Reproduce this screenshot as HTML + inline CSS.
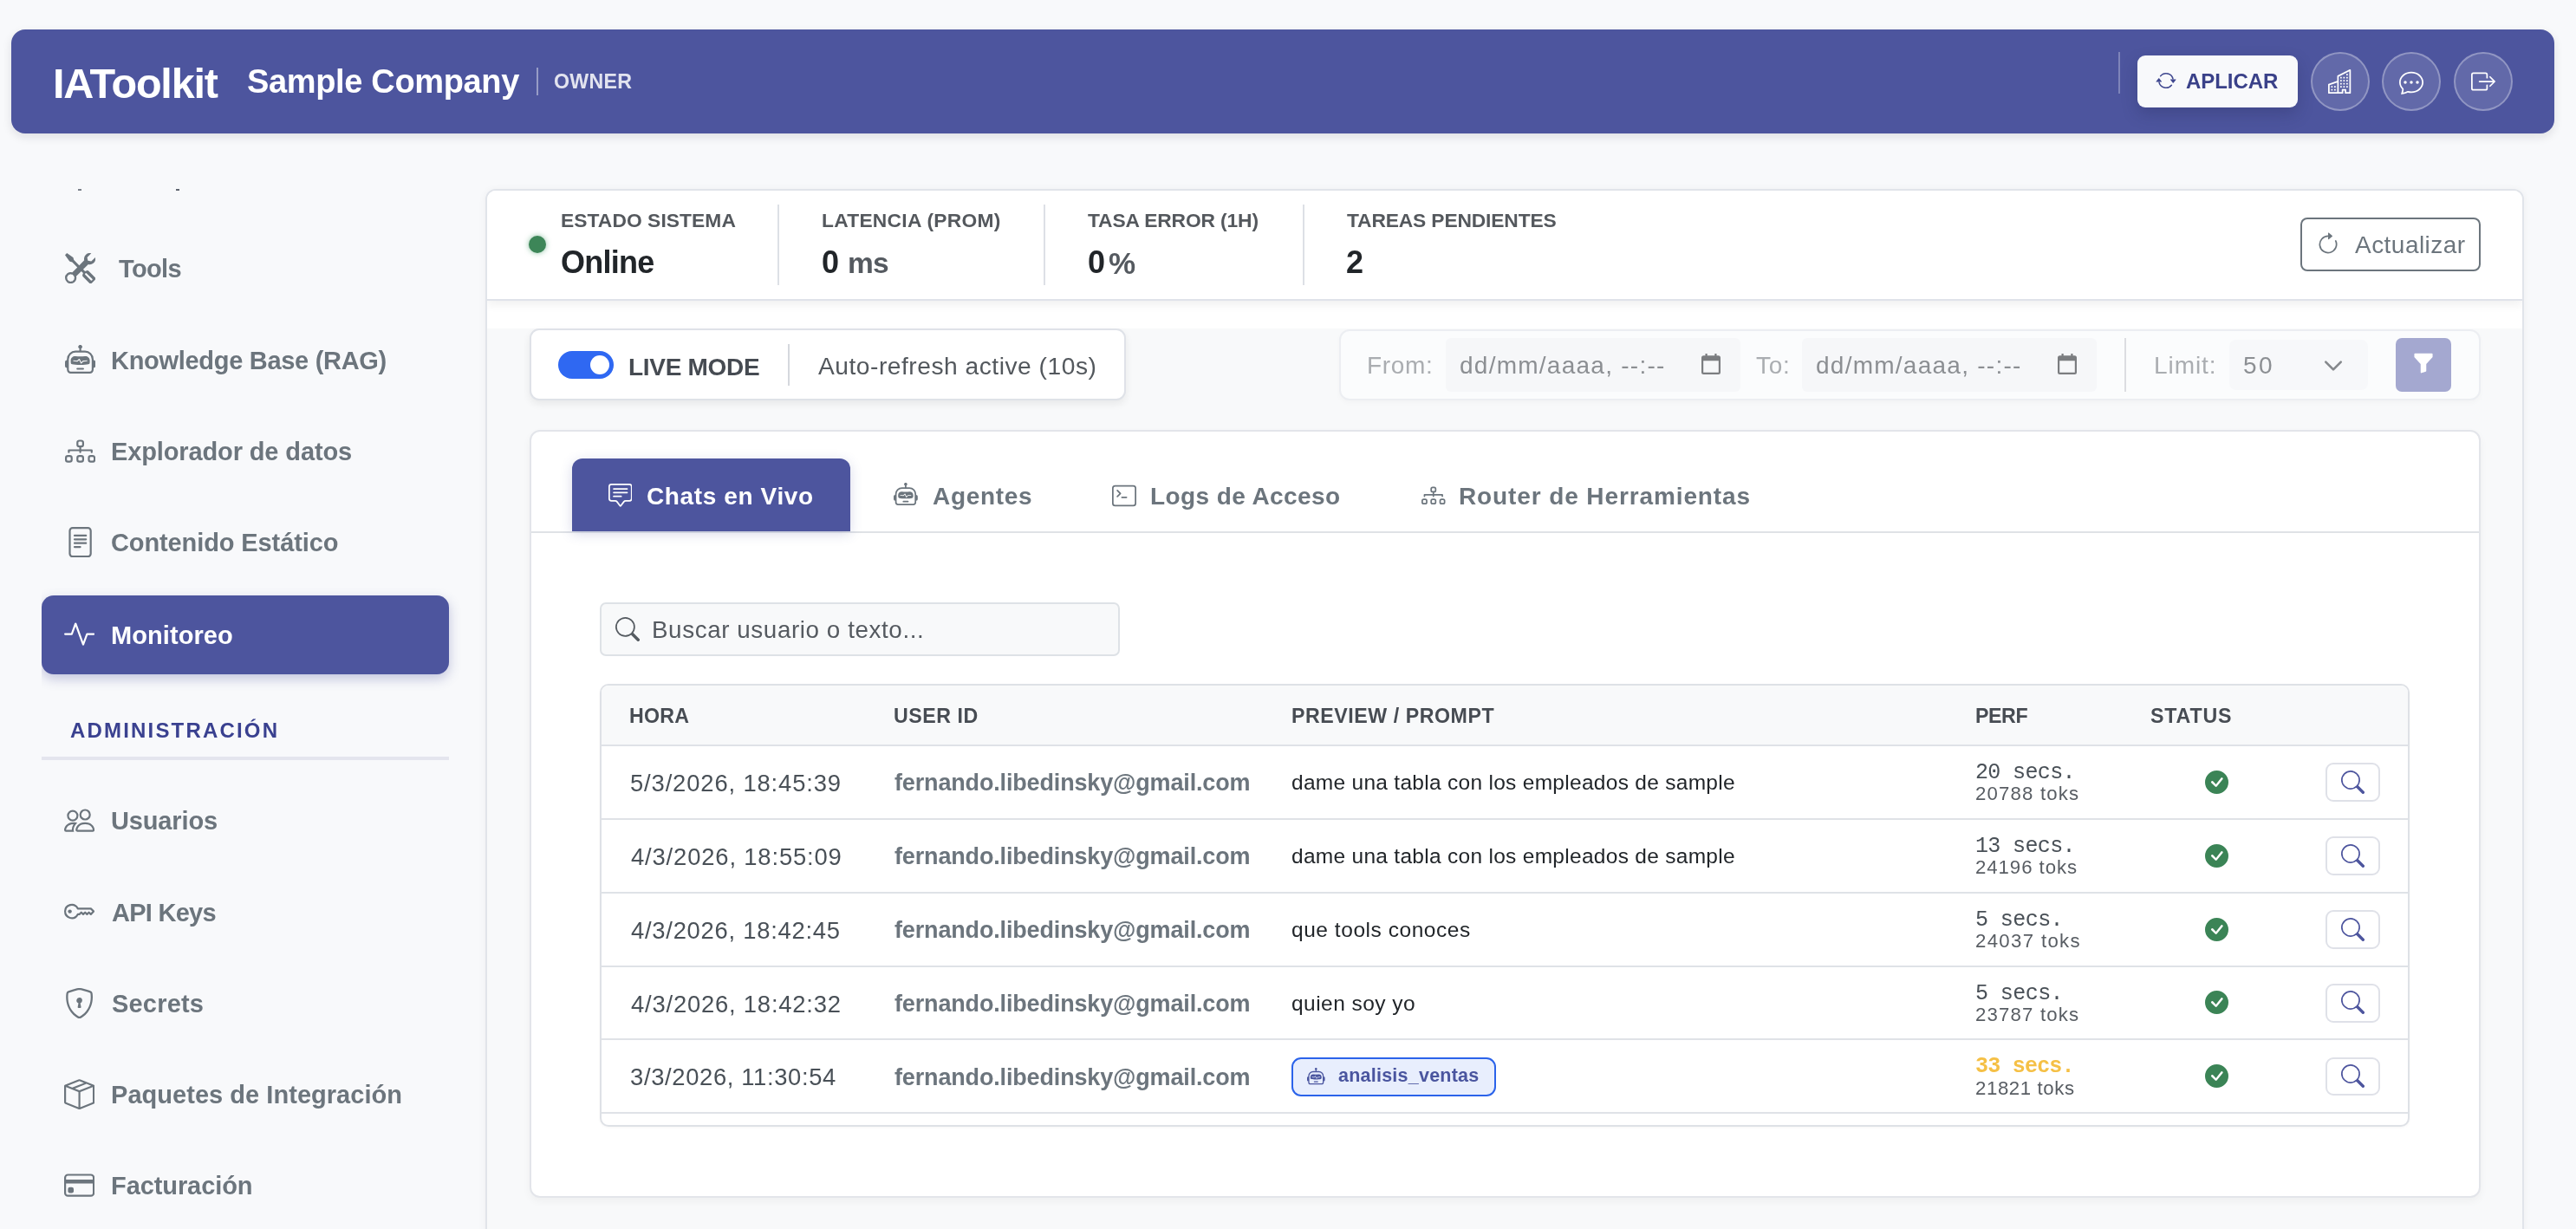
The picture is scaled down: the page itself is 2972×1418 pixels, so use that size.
<!DOCTYPE html>
<html lang="es"><head><meta charset="utf-8"><title>IAToolkit - Monitoreo</title>
<style>
html,body{margin:0;padding:0}
body{width:2972px;height:1418px;overflow:hidden;position:relative;background:#f8f9fb;font-family:'Liberation Sans', sans-serif;}
body>div,body>span,body>svg{position:absolute;box-sizing:border-box}
body>span{line-height:1;white-space:pre;display:block;will-change:transform}
</style></head><body>
<div style="left:13px;top:34px;width:2934px;height:120px;background:#4d559e;border-radius:16px;box-shadow:0 4px 11px rgba(20,20,40,.11)"></div>
<span style="left:60.80px;top:71.54px;font-size:48.5px;color:#fff;font-weight:700;letter-spacing:-1.163px;">IAToolkit</span>
<span style="left:285.20px;top:74.83px;font-size:38px;color:#fff;font-weight:700;letter-spacing:-0.348px;">Sample Company</span>
<div style="left:619px;top:78px;width:2px;height:32px;background:rgba(255,255,255,.42)"></div>
<span style="left:639.10px;top:83.46px;font-size:23.2px;color:rgba(255,255,255,.84);font-weight:700;letter-spacing:0.267px;">OWNER</span>
<div style="left:2444px;top:60px;width:2px;height:48px;background:rgba(255,255,255,.28)"></div>
<div style="left:2466px;top:64px;width:185px;height:60px;background:#f8f9fb;border-radius:9px;box-shadow:0 8px 18px rgba(30,35,80,.25)"></div>
<svg style="left:2487px;top:81.3px;" width="24" height="24" viewBox="0 0 16 16" fill="#3f478f"><path d="M11.534 7h3.932a.25.25 0 0 1 .192.41l-1.966 2.36a.25.25 0 0 1-.384 0l-1.966-2.36a.25.25 0 0 1 .192-.41m-11 2h3.932a.25.25 0 0 0 .192-.41L2.692 6.23a.25.25 0 0 0-.384 0L.342 8.59A.25.25 0 0 0 .534 9"/><path fill-rule="evenodd" d="M8 3c-1.552 0-2.94.707-3.857 1.818a.5.5 0 1 1-.771-.636A6.002 6.002 0 0 1 13.917 7H12.9A5 5 0 0 0 8 3M3.1 9a5.002 5.002 0 0 0 8.757 2.182.5.5 0 1 1 .771.636A6.002 6.002 0 0 1 2.083 9z"/></svg>
<span style="left:2522.20px;top:82.48px;font-size:24px;color:#3a4189;font-weight:700;letter-spacing:-0.055px;">APLICAR</span>
<div style="left:2666px;top:60px;width:68px;height:68px;border-radius:50%;background:rgba(255,255,255,.12);border:2px solid rgba(255,255,255,.3)"></div>
<svg style="left:2686px;top:80px;" width="28" height="28" viewBox="0 0 16 16" fill="#fff"><path d="M14.763.075A.5.5 0 0 1 15 .5v15a.5.5 0 0 1-.5.5h-3a.5.5 0 0 1-.5-.5V14h-1v1.5a.5.5 0 0 1-.5.5h-9a.5.5 0 0 1-.5-.5V10a.5.5 0 0 1 .342-.474L6 7.64V4.5a.5.5 0 0 1 .276-.447l8-4a.5.5 0 0 1 .487.022M6 8.694 1 10.36V15h5zM7 15h2v-1.5a.5.5 0 0 1 .5-.5h2a.5.5 0 0 1 .5.5V15h2V1.309l-7 3.5z"/><path d="M2 11h1v1H2zm2 0h1v1H4zm-2 2h1v1H2zm2 0h1v1H4zm4-4h1v1H8zm2 0h1v1h-1zm-2 2h1v1H8zm2 0h1v1h-1zm2-2h1v1h-1zm0 2h1v1h-1zM8 7h1v1H8zm2 0h1v1h-1zm2 0h1v1h-1zM8 5h1v1H8zm2 0h1v1h-1zm2 0h1v1h-1zm0-2h1v1h-1z"/></svg>
<div style="left:2748px;top:60px;width:68px;height:68px;border-radius:50%;background:rgba(255,255,255,.12);border:2px solid rgba(255,255,255,.3)"></div>
<svg style="left:2768px;top:81px;" width="28" height="28" viewBox="0 0 16 16" fill="#fff"><path d="M5 8a1 1 0 1 1-2 0 1 1 0 0 1 2 0m4 0a1 1 0 1 1-2 0 1 1 0 0 1 2 0m3 1a1 1 0 1 0 0-2 1 1 0 0 0 0 2"/><path d="m2.165 15.803.02-.004c1.83-.363 2.948-.842 3.468-1.105A9 9 0 0 0 8 15c4.418 0 8-3.134 8-7s-3.582-7-8-7-8 3.134-8 7c0 1.76.743 3.37 1.97 4.6a10.4 10.4 0 0 1-.524 2.318l-.003.011a11 11 0 0 1-.244.637c-.079.186.074.394.273.362a22 22 0 0 0 .693-.125m.8-3.108a1 1 0 0 0-.287-.801C1.618 10.83 1 9.468 1 8c0-3.192 3.004-6 7-6s7 2.808 7 6-3.004 6-7 6a8 8 0 0 1-2.088-.272 1 1 0 0 0-.711.074c-.387.196-1.24.57-2.634.893a11 11 0 0 0 .398-2"/></svg>
<div style="left:2831px;top:60px;width:68px;height:68px;border-radius:50%;background:rgba(255,255,255,.12);border:2px solid rgba(255,255,255,.3)"></div>
<svg style="left:2851px;top:80px;" width="28" height="28" viewBox="0 0 16 16" fill="#fff"><path fill-rule="evenodd" d="M10 12.5a.5.5 0 0 1-.5.5h-8a.5.5 0 0 1-.5-.5v-9a.5.5 0 0 1 .5-.5h8a.5.5 0 0 1 .5.5v2a.5.5 0 0 0 1 0v-2A1.5 1.5 0 0 0 9.5 2h-8A1.5 1.5 0 0 0 0 3.5v9A1.5 1.5 0 0 0 1.5 14h8a1.5 1.5 0 0 0 1.5-1.5v-2a.5.5 0 0 0-1 0z"/><path fill-rule="evenodd" d="M15.854 8.354a.5.5 0 0 0 0-.708l-3-3a.5.5 0 0 0-.708.708L14.293 7.5H5.5a.5.5 0 0 0 0 1h8.793l-2.147 2.146a.5.5 0 0 0 .708.708z"/></svg>
<div style="left:89.7px;top:218px;width:4.6px;height:1.7px;background:#7a808a"></div>
<div style="left:203px;top:218px;width:4.2px;height:2.4px;background:#5f6570"></div>
<div style="left:48px;top:650px;width:512px;height:180px;overflow:hidden"><div style="position:absolute;left:0;top:37px;width:470px;height:91px;background:#4d559e;border-radius:14px;box-shadow:0 5px 14px rgba(77,85,158,.32)"></div></div>
<svg style="left:74.5px;top:291.7px;" width="35.2" height="35.2" viewBox="0 0 16 16" fill="#6c757d"><path d="M1 0 0 1l2.2 3.081a1 1 0 0 0 .815.419h.07a1 1 0 0 1 .708.293l2.675 2.675-2.617 2.654A3.003 3.003 0 0 0 0 13a3 3 0 1 0 5.878-.851l2.654-2.617.968.968-.305.914a1 1 0 0 0 .242 1.023l3.27 3.27a.997.997 0 0 0 1.414 0l1.586-1.586a.997.997 0 0 0 0-1.414l-3.27-3.27a1 1 0 0 0-1.023-.242L10.5 9.5l-.96-.96 2.68-2.643A3.005 3.005 0 0 0 16 3q0-.405-.102-.777l-2.14 2.141L12 4l-.364-1.757L13.777.102a3 3 0 0 0-3.675 3.68L7.462 6.46 4.793 3.793a1 1 0 0 1-.293-.707v-.071a1 1 0 0 0-.419-.814zm9.646 10.646a.5.5 0 0 1 .708 0l2.914 2.915a.5.5 0 0 1-.707.707l-2.915-2.914a.5.5 0 0 1 0-.708M3 11l.471.242.529.026.287.445.445.287.026.529L5 13l-.242.471-.026.529-.445.287-.287.445-.529.026L3 15l-.471-.242L2 14.732l-.287-.445L1.268 14l-.026-.529L1 13l.242-.471.026-.529.445-.287.287-.445.529-.026z"/></svg>
<span style="left:137.00px;top:295.85px;font-size:29px;color:#6c757d;font-weight:700;letter-spacing:-0.662px;">Tools</span>
<svg style="left:74.5px;top:397.8px;" width="35.2" height="35.2" viewBox="0 0 16 16" fill="#6c757d"><path d="M6 12.5a.5.5 0 0 1 .5-.5h3a.5.5 0 0 1 0 1h-3a.5.5 0 0 1-.5-.5M3 8.062C3 6.76 4.235 5.765 5.53 5.886a26.6 26.6 0 0 0 4.94 0C11.765 5.765 13 6.76 13 8.062v1.157a.93.93 0 0 1-.765.935c-.845.147-2.34.346-4.235.346s-3.39-.2-4.235-.346A.93.93 0 0 1 3 9.219zm4.542-.827a.25.25 0 0 0-.217.068l-.92.9a25 25 0 0 1-1.871-.183.25.25 0 0 0-.068.495c.55.076 1.232.149 2.02.193a.25.25 0 0 0 .189-.071l.754-.736.847 1.71a.25.25 0 0 0 .404.062l.932-.97a25 25 0 0 0 1.922-.188.25.25 0 0 0-.068-.495c-.538.074-1.207.145-1.98.189a.25.25 0 0 0-.166.076l-.754.785-.842-1.7a.25.25 0 0 0-.182-.135"/><path d="M8.5 1.866a1 1 0 1 0-1 0V3h-2A4.5 4.5 0 0 0 1 7.5V8a1 1 0 0 0-1 1v2a1 1 0 0 0 1 1v1a2 2 0 0 0 2 2h10a2 2 0 0 0 2-2v-1a1 1 0 0 0 1-1V9a1 1 0 0 0-1-1v-.5A4.5 4.5 0 0 0 10.5 3h-2zM14 7.5V13a1 1 0 0 1-1 1H3a1 1 0 0 1-1-1V7.5A3.5 3.5 0 0 1 5.5 4h5A3.5 3.5 0 0 1 14 7.5"/></svg>
<span style="left:128.00px;top:401.95px;font-size:29px;color:#6c757d;font-weight:700;letter-spacing:-0.295px;">Knowledge Base (RAG)</span>
<svg style="left:74.5px;top:502.6px;" width="35.2" height="35.2" viewBox="0 0 16 16" fill="#6c757d"><path fill-rule="evenodd" d="M6 3.5A1.5 1.5 0 0 1 7.5 2h1A1.5 1.5 0 0 1 10 3.5v1A1.5 1.5 0 0 1 8.5 6v1H14a.5.5 0 0 1 .5.5v1a.5.5 0 0 1-1 0V8h-5v.5a.5.5 0 0 1-1 0V8h-5v.5a.5.5 0 0 1-1 0v-1A.5.5 0 0 1 2 7h5.5V6A1.5 1.5 0 0 1 6 4.5zM8.5 5a.5.5 0 0 0 .5-.5v-1a.5.5 0 0 0-.5-.5h-1a.5.5 0 0 0-.5.5v1a.5.5 0 0 0 .5.5zM0 11.5A1.5 1.5 0 0 1 1.5 10h1A1.5 1.5 0 0 1 4 11.5v1A1.5 1.5 0 0 1 2.5 14h-1A1.5 1.5 0 0 1 0 12.5zm1.5-.5a.5.5 0 0 0-.5.5v1a.5.5 0 0 0 .5.5h1a.5.5 0 0 0 .5-.5v-1a.5.5 0 0 0-.5-.5zm4.5.5A1.5 1.5 0 0 1 7.5 10h1a1.5 1.5 0 0 1 1.5 1.5v1A1.5 1.5 0 0 1 8.5 14h-1A1.5 1.5 0 0 1 6 12.5zm1.5-.5a.5.5 0 0 0-.5.5v1a.5.5 0 0 0 .5.5h1a.5.5 0 0 0 .5-.5v-1a.5.5 0 0 0-.5-.5zm4.5.5a1.5 1.5 0 0 1 1.5-1.5h1a1.5 1.5 0 0 1 1.5 1.5v1a1.5 1.5 0 0 1-1.5 1.5h-1a1.5 1.5 0 0 1-1.5-1.5zm1.5-.5a.5.5 0 0 0-.5.5v1a.5.5 0 0 0 .5.5h1a.5.5 0 0 0 .5-.5v-1a.5.5 0 0 0-.5-.5z"/></svg>
<span style="left:128.00px;top:506.75px;font-size:29px;color:#6c757d;font-weight:700;letter-spacing:-0.125px;">Explorador de datos</span>
<svg style="left:74.5px;top:608.2px;" width="35.2" height="35.2" viewBox="0 0 16 16" fill="#6c757d"><path d="M5 4a.5.5 0 0 0 0 1h6a.5.5 0 0 0 0-1zm-.5 2.5A.5.5 0 0 1 5 6h6a.5.5 0 0 1 0 1H5a.5.5 0 0 1-.5-.5M5 8a.5.5 0 0 0 0 1h6a.5.5 0 0 0 0-1zm0 2a.5.5 0 0 0 0 1h3a.5.5 0 0 0 0-1z"/><path d="M2 2a2 2 0 0 1 2-2h8a2 2 0 0 1 2 2v12a2 2 0 0 1-2 2H4a2 2 0 0 1-2-2zm10-1H4a1 1 0 0 0-1 1v12a1 1 0 0 0 1 1h8a1 1 0 0 0 1-1V2a1 1 0 0 0-1-1"/></svg>
<span style="left:128.00px;top:612.35px;font-size:29px;color:#6c757d;font-weight:700;letter-spacing:-0.107px;">Contenido Estático</span>
<svg style="left:73.9px;top:713.6px;" width="35.2" height="35.2" viewBox="0 0 16 16" fill="#fff"><path fill-rule="evenodd" d="M6 2a.5.5 0 0 1 .47.33L10 12.036l1.53-4.208A.5.5 0 0 1 12 7.5h3.5a.5.5 0 0 1 0 1h-3.15l-1.88 5.17a.5.5 0 0 1-.94 0L6 3.964 4.47 8.171A.5.5 0 0 1 4 8.5H.5a.5.5 0 0 1 0-1h3.15l1.88-5.17A.5.5 0 0 1 6 2"/></svg>
<span style="left:128.00px;top:718.75px;font-size:29px;color:#fff;font-weight:700;letter-spacing:0.071px;">Monitoreo</span>
<span style="left:81.00px;top:831.28px;font-size:24px;color:#3a4190;font-weight:700;letter-spacing:2.183px;">ADMINISTRACIÓN</span>
<div style="left:48px;top:873px;width:470px;height:3.6px;background:#e4e5ee"></div>
<svg style="left:74.2px;top:929.3px;" width="35.2" height="35.2" viewBox="0 0 16 16" fill="#6c757d"><path d="M15 14s1 0 1-1-1-4-5-4-5 3-5 4 1 1 1 1zm-7.978-1L7 12.996c.001-.264.167-1.03.76-1.72C8.312 10.629 9.282 10 11 10c1.717 0 2.687.63 3.24 1.276.593.69.758 1.457.76 1.72l-.008.002-.014.002zM11 7a2 2 0 1 0 0-4 2 2 0 0 0 0 4m3-2a3 3 0 1 1-6 0 3 3 0 0 1 6 0M6.936 9.28a6 6 0 0 0-1.23-.247A7 7 0 0 0 5 9c-4 0-5 3-5 4q0 1 1 1h4.216A2.24 2.24 0 0 1 5 13c0-1.01.377-2.042 1.09-2.904.243-.294.526-.569.846-.816M4.92 10A5.5 5.5 0 0 0 4 13H1c0-.26.164-1.03.76-1.724.545-.636 1.492-1.256 3.16-1.275ZM1.5 5.5a3 3 0 1 1 6 0 3 3 0 0 1-6 0m3-2a2 2 0 1 0 0 4 2 2 0 0 0 0-4"/></svg>
<span style="left:127.70px;top:932.65px;font-size:29px;color:#6c757d;font-weight:700;letter-spacing:-0.139px;">Usuarios</span>
<svg style="left:74.2px;top:1034px;" width="35.2" height="35.2" viewBox="0 0 16 16" fill="#6c757d"><path d="M0 8a4 4 0 0 1 7.465-2H14a.5.5 0 0 1 .354.146l1.5 1.5a.5.5 0 0 1 0 .708l-1.5 1.5a.5.5 0 0 1-.708 0L13 9.207l-.646.647a.5.5 0 0 1-.708 0L11 9.207l-.646.647a.5.5 0 0 1-.708 0L9 9.207l-.646.647A.5.5 0 0 1 8 10h-.535A4 4 0 0 1 0 8m4-3a3 3 0 1 0 2.712 4.285A.5.5 0 0 1 7.163 9h.63l.853-.854a.5.5 0 0 1 .708 0l.646.647.646-.647a.5.5 0 0 1 .708 0l.646.647.646-.647a.5.5 0 0 1 .708 0l.646.647.793-.793-1-1h-6.63a.5.5 0 0 1-.451-.285A3 3 0 0 0 4 5"/><path d="M4 8a1 1 0 1 1-2 0 1 1 0 0 1 2 0"/></svg>
<span style="left:128.70px;top:1039.05px;font-size:29px;color:#6c757d;font-weight:700;letter-spacing:-0.743px;">API Keys</span>
<svg style="left:74.2px;top:1140.1px;" width="35.2" height="35.2" viewBox="0 0 16 16" fill="#6c757d"><path d="M5.338 1.59a61 61 0 0 0-2.837.856.48.48 0 0 0-.328.39c-.554 4.157.726 7.19 2.253 9.188a10.7 10.7 0 0 0 2.287 2.233c.346.244.652.42.893.533q.18.085.293.118a1 1 0 0 0 .101.025 1 1 0 0 0 .1-.025q.114-.034.294-.118c.24-.113.547-.29.893-.533a10.7 10.7 0 0 0 2.287-2.233c1.527-1.997 2.807-5.031 2.253-9.188a.48.48 0 0 0-.328-.39c-.651-.213-1.75-.56-2.837-.855C9.552 1.29 8.531 1.067 8 1.067c-.53 0-1.552.223-2.662.524zM5.072.56C6.157.265 7.31 0 8 0s1.843.265 2.928.56c1.11.3 2.229.655 2.887.87a1.54 1.54 0 0 1 1.044 1.262c.596 4.477-.787 7.795-2.465 9.99a11.8 11.8 0 0 1-2.517 2.453 7 7 0 0 1-1.048.625c-.28.132-.581.24-.829.24s-.548-.108-.829-.24a7 7 0 0 1-1.048-.625 11.8 11.8 0 0 1-2.517-2.453C1.928 10.487.545 7.169 1.141 2.692A1.54 1.54 0 0 1 2.185 1.43 63 63 0 0 1 5.072.56"/><path d="M9.5 6.5a1.5 1.5 0 0 1-1 1.415l.385 1.99a.5.5 0 0 1-.491.595h-.788a.5.5 0 0 1-.49-.595l.384-1.99a1.5 1.5 0 1 1 2-1.415"/></svg>
<span style="left:128.70px;top:1144.05px;font-size:29px;color:#6c757d;font-weight:700;letter-spacing:0.188px;">Secrets</span>
<svg style="left:74.2px;top:1244.6px;" width="35.2" height="35.2" viewBox="0 0 16 16" fill="#6c757d"><path d="M8.186 1.113a.5.5 0 0 0-.372 0L1.846 3.5l2.404.961L10.404 2zm3.564 1.426L5.596 5 8 5.961 14.154 3.5zm3.25 1.7-6.5 2.6v7.922l6.5-2.6V4.24zM7.5 14.762V6.838L1 4.239v7.923zM7.443.184a1.5 1.5 0 0 1 1.114 0l7.129 2.852A.5.5 0 0 1 16 3.5v8.662a1 1 0 0 1-.629.928l-7.185 2.874a.5.5 0 0 1-.372 0L.63 13.09a1 1 0 0 1-.63-.928V3.5a.5.5 0 0 1 .314-.464z"/></svg>
<span style="left:127.70px;top:1249.45px;font-size:29px;color:#6c757d;font-weight:700;letter-spacing:0.037px;">Paquetes de Integración</span>
<svg style="left:74.2px;top:1350.4px;" width="35.2" height="35.2" viewBox="0 0 16 16" fill="#6c757d"><path d="M0 4a2 2 0 0 1 2-2h12a2 2 0 0 1 2 2v8a2 2 0 0 1-2 2H2a2 2 0 0 1-2-2zm2-1a1 1 0 0 0-1 1v1h14V4a1 1 0 0 0-1-1zm13 4H1v5a1 1 0 0 0 1 1h12a1 1 0 0 0 1-1z"/><path d="M2 10a1 1 0 0 1 1-1h1a1 1 0 0 1 1 1v1a1 1 0 0 1-1 1H3a1 1 0 0 1-1-1z"/></svg>
<span style="left:127.70px;top:1354.35px;font-size:29px;color:#6c757d;font-weight:700;letter-spacing:-0.086px;">Facturación</span>
<div style="left:560px;top:218px;width:2352px;height:1230px;background:#f8f9fa;border:2px solid #e1e4ea;border-radius:12px;overflow:hidden;box-shadow:0 1px 10px rgba(0,0,0,.05)"><div style="position:absolute;left:0;top:0;right:0;height:159px;background:#fff"></div><div style="position:absolute;left:0;top:0;right:0;height:125px;background:#fff;border-bottom:2px solid #e0e3ea;box-shadow:0 5px 10px rgba(0,0,0,.06)"></div></div>
<div style="left:609.7px;top:271.7px;width:20.6px;height:20.6px;background:#3d8658;border-radius:50%;box-shadow:0 0 6px rgba(45,140,85,.55)"></div>
<span style="left:646.50px;top:242.80px;font-size:22.8px;color:#54585d;font-weight:700;letter-spacing:0.069px;">ESTADO SISTEMA</span>
<span style="left:646.50px;top:285.33px;font-size:36px;color:#212529;font-weight:700;letter-spacing:-0.737px;">Online</span>
<div style="left:897px;top:236px;width:2px;height:93px;background:#dde0e6"></div>
<span style="left:947.70px;top:242.80px;font-size:22.8px;color:#54585d;font-weight:700;letter-spacing:0.260px;">LATENCIA (PROM)</span>
<span style="left:947.70px;top:285.33px;font-size:36px;color:#212529;font-weight:700;">0</span>
<span style="left:977.50px;top:287.44px;font-size:33.5px;color:#555a60;font-weight:700;letter-spacing:-0.887px;">ms</span>
<div style="left:1204.2px;top:236px;width:2px;height:93px;background:#dde0e6"></div>
<span style="left:1255.10px;top:242.80px;font-size:22.8px;color:#54585d;font-weight:700;letter-spacing:-0.128px;">TASA ERROR (1H)</span>
<span style="left:1254.60px;top:285.33px;font-size:36px;color:#212529;font-weight:700;">0</span>
<span style="left:1278.80px;top:286.17px;font-size:35px;color:#555a60;font-weight:700;">%</span>
<div style="left:1503px;top:236px;width:2px;height:93px;background:#dde0e6"></div>
<span style="left:1553.60px;top:242.80px;font-size:22.8px;color:#54585d;font-weight:700;letter-spacing:-0.146px;">TAREAS PENDIENTES</span>
<span style="left:1553.00px;top:285.33px;font-size:36px;color:#212529;font-weight:700;">2</span>
<div style="left:2654px;top:251px;width:208px;height:62px;border:2px solid #6c757d;border-radius:8px;background:#fff"></div>
<svg style="left:2672.2px;top:267.6px;" width="28" height="28" viewBox="0 0 16 16" fill="#6c757d"><path fill-rule="evenodd" d="M8 3a5 5 0 1 0 4.546 2.914.5.5 0 0 1 .908-.417A6 6 0 1 1 8 2z"/><path d="M8 4.466V.534a.25.25 0 0 1 .41-.192l2.36 1.966c.12.1.12.284 0 .384L8.41 4.658A.25.25 0 0 1 8 4.466"/></svg>
<span style="left:2716.80px;top:268.60px;font-size:28px;color:#6c757d;letter-spacing:0.465px;">Actualizar</span>
<div style="left:610.5px;top:379px;width:688px;height:83.3px;background:#fff;border:2px solid #dfe2e8;border-radius:11px;box-shadow:0 4px 10px rgba(0,0,0,.07)"></div>
<div style="left:644px;top:405px;width:64px;height:32px;background:#2f68f2;border-radius:16px"><div style="position:absolute;right:5px;top:5px;width:22px;height:22px;border-radius:50%;background:#fff"></div></div>
<span style="left:725.00px;top:409.90px;font-size:28px;color:#464b52;font-weight:700;letter-spacing:-0.292px;">LIVE MODE</span>
<div style="left:908.5px;top:397px;width:2px;height:48px;background:#d5d8dd"></div>
<span style="left:944.40px;top:407.53px;font-size:28.2px;color:#53585d;letter-spacing:0.511px;">Auto-refresh active (10s)</span>
<div style="left:1545px;top:379.5px;width:1317px;height:82.5px;background:#fbfcfd;border:2px solid #eceef2;border-radius:12px;box-shadow:0 3px 6px rgba(0,0,0,.025)"></div>
<span style="left:1577.00px;top:407.90px;font-size:28px;color:#aaadb1;letter-spacing:0.669px;">From:</span>
<div style="left:1668px;top:390px;width:340px;height:62px;background:#f6f7f9;border-radius:6px"></div>
<span style="left:1684.00px;top:407.90px;font-size:28px;color:#8c8f93;letter-spacing:1.253px;">dd/mm/aaaa, --:--</span>
<svg style="left:1963px;top:408px" width="22" height="24" viewBox="0 0 22 24" fill="#7b7d80"><path fill-rule="evenodd" d="M4.5 0h2.2v2.3h8.6V0h2.2v2.3H19.5A2.5 2.5 0 0 1 22 4.8v16.7A2.5 2.5 0 0 1 19.500 24H2.5A2.5 2.5 0 0 1 0 21.500V4.800A2.500 2.500 0 0 1 2.500 2.300H4.500zM2.200 8.200V21.800H19.800V8.200z"/></svg>
<span style="left:2025.70px;top:407.90px;font-size:28px;color:#aaadb1;letter-spacing:0.714px;">To:</span>
<div style="left:2079px;top:390px;width:340px;height:62px;background:#f6f7f9;border-radius:6px"></div>
<span style="left:2095.00px;top:407.90px;font-size:28px;color:#8c8f93;letter-spacing:1.253px;">dd/mm/aaaa, --:--</span>
<svg style="left:2374px;top:408px" width="22" height="24" viewBox="0 0 22 24" fill="#7b7d80"><path fill-rule="evenodd" d="M4.5 0h2.2v2.3h8.6V0h2.2v2.3H19.5A2.5 2.5 0 0 1 22 4.8v16.7A2.5 2.5 0 0 1 19.500 24H2.5A2.5 2.5 0 0 1 0 21.500V4.800A2.500 2.500 0 0 1 2.500 2.300H4.500zM2.200 8.200V21.800H19.800V8.200z"/></svg>
<div style="left:2451px;top:390px;width:2px;height:62px;background:#dcdde1"></div>
<span style="left:2484.60px;top:407.90px;font-size:28px;color:#aaadb1;letter-spacing:0.937px;">Limit:</span>
<div style="left:2572px;top:392px;width:160px;height:58px;background:#f7f8fa;border-radius:8px"></div>
<span style="left:2588.00px;top:407.90px;font-size:28px;color:#8c8f93;letter-spacing:2.428px;">50</span>
<svg style="left:2678px;top:408px" width="28" height="28" viewBox="0 0 16 16" fill="none" stroke="#85888c" stroke-width="1.5" stroke-linecap="round" stroke-linejoin="round"><path d="m3 5.5 5 5 5-5"/></svg>
<div style="left:2764px;top:390px;width:64px;height:62px;background:#a4a8d0;border-radius:7px"></div>
<svg style="left:2783px;top:406px;" width="26" height="26" viewBox="0 0 16 16" fill="#fff"><path d="M1.5 1.5A.5.5 0 0 1 2 1h12a.5.5 0 0 1 .5.5v2a.5.5 0 0 1-.128.334L10 8.692V13.5a.5.5 0 0 1-.342.474l-3 1A.5.5 0 0 1 6 14.5V8.692L1.628 3.834A.5.5 0 0 1 1.5 3.5z"/></svg>
<div style="left:611px;top:496px;width:2251px;height:886px;background:#fff;border:2px solid #e3e5ea;border-radius:12px;box-shadow:0 4px 10px rgba(0,0,0,.045)"></div>
<div style="left:613px;top:613px;width:2247px;height:2px;background:#dfe2e6"></div>
<div style="left:660px;top:529px;width:321px;height:84px;background:#4d559e;border-radius:12px 12px 0 0;box-shadow:0 3px 14px rgba(77,85,158,.22)"></div>
<svg style="left:701.6px;top:557.8px;" width="27.6" height="27.6" viewBox="0 0 16 16" fill="#fff"><path d="M14 1a1 1 0 0 1 1 1v8a1 1 0 0 1-1 1h-2.5a2 2 0 0 0-1.6.8L8 14.333 6.1 11.8a2 2 0 0 0-1.6-.8H2a1 1 0 0 1-1-1V2a1 1 0 0 1 1-1zM2 0a2 2 0 0 0-2 2v8a2 2 0 0 0 2 2h2.5a1 1 0 0 1 .8.4l1.9 2.533a1 1 0 0 0 1.6 0l1.9-2.533a1 1 0 0 1 .8-.4H14a2 2 0 0 0 2-2V2a2 2 0 0 0-2-2z"/><path d="M3 3.5a.5.5 0 0 1 .5-.5h9a.5.5 0 0 1 0 1h-9a.5.5 0 0 1-.5-.5M3 6a.5.5 0 0 1 .5-.5h9a.5.5 0 0 1 0 1h-9A.5.5 0 0 1 3 6m0 2.5a.5.5 0 0 1 .5-.5h5a.5.5 0 0 1 0 1h-5a.5.5 0 0 1-.5-.5"/></svg>
<span style="left:745.70px;top:558.70px;font-size:28px;color:#fff;font-weight:700;letter-spacing:0.621px;">Chats en Vivo</span>
<svg style="left:1031.2px;top:557.4px;" width="27.8" height="27.8" viewBox="0 0 16 16" fill="#6c757d"><path d="M6 12.5a.5.5 0 0 1 .5-.5h3a.5.5 0 0 1 0 1h-3a.5.5 0 0 1-.5-.5M3 8.062C3 6.76 4.235 5.765 5.53 5.886a26.6 26.6 0 0 0 4.94 0C11.765 5.765 13 6.76 13 8.062v1.157a.93.93 0 0 1-.765.935c-.845.147-2.34.346-4.235.346s-3.39-.2-4.235-.346A.93.93 0 0 1 3 9.219zm4.542-.827a.25.25 0 0 0-.217.068l-.92.9a25 25 0 0 1-1.871-.183.25.25 0 0 0-.068.495c.55.076 1.232.149 2.02.193a.25.25 0 0 0 .189-.071l.754-.736.847 1.71a.25.25 0 0 0 .404.062l.932-.97a25 25 0 0 0 1.922-.188.25.25 0 0 0-.068-.495c-.538.074-1.207.145-1.98.189a.25.25 0 0 0-.166.076l-.754.785-.842-1.7a.25.25 0 0 0-.182-.135"/><path d="M8.5 1.866a1 1 0 1 0-1 0V3h-2A4.5 4.5 0 0 0 1 7.5V8a1 1 0 0 0-1 1v2a1 1 0 0 0 1 1v1a2 2 0 0 0 2 2h10a2 2 0 0 0 2-2v-1a1 1 0 0 0 1-1V9a1 1 0 0 0-1-1v-.5A4.5 4.5 0 0 0 10.5 3h-2zM14 7.5V13a1 1 0 0 1-1 1H3a1 1 0 0 1-1-1V7.5A3.5 3.5 0 0 1 5.5 4h5A3.5 3.5 0 0 1 14 7.5"/></svg>
<span style="left:1076.00px;top:558.70px;font-size:28px;color:#6c757d;font-weight:700;letter-spacing:0.684px;">Agentes</span>
<svg style="left:1282.6px;top:557.6px;" width="28" height="28" viewBox="0 0 16 16" fill="#6c757d"><path d="M6 9a.5.5 0 0 1 .5-.5h3a.5.5 0 0 1 0 1h-3A.5.5 0 0 1 6 9M3.854 4.146a.5.5 0 1 0-.708.708L4.793 6.5 3.146 8.146a.5.5 0 1 0 .708.708l2-2a.5.5 0 0 0 0-.708z"/><path d="M2 1a2 2 0 0 0-2 2v10a2 2 0 0 0 2 2h12a2 2 0 0 0 2-2V3a2 2 0 0 0-2-2zm12 1a1 1 0 0 1 1 1v10a1 1 0 0 1-1 1H2a1 1 0 0 1-1-1V3a1 1 0 0 1 1-1z"/></svg>
<span style="left:1327.00px;top:558.70px;font-size:28px;color:#6c757d;font-weight:700;letter-spacing:0.413px;">Logs de Acceso</span>
<svg style="left:1640px;top:557.6px;" width="27.5" height="27.5" viewBox="0 0 16 16" fill="#6c757d"><path fill-rule="evenodd" d="M6 3.5A1.5 1.5 0 0 1 7.5 2h1A1.5 1.5 0 0 1 10 3.5v1A1.5 1.5 0 0 1 8.5 6v1H14a.5.5 0 0 1 .5.5v1a.5.5 0 0 1-1 0V8h-5v.5a.5.5 0 0 1-1 0V8h-5v.5a.5.5 0 0 1-1 0v-1A.5.5 0 0 1 2 7h5.5V6A1.5 1.5 0 0 1 6 4.5zM8.5 5a.5.5 0 0 0 .5-.5v-1a.5.5 0 0 0-.5-.5h-1a.5.5 0 0 0-.5.5v1a.5.5 0 0 0 .5.5zM0 11.5A1.5 1.5 0 0 1 1.5 10h1A1.5 1.5 0 0 1 4 11.5v1A1.5 1.5 0 0 1 2.5 14h-1A1.5 1.5 0 0 1 0 12.5zm1.5-.5a.5.5 0 0 0-.5.5v1a.5.5 0 0 0 .5.5h1a.5.5 0 0 0 .5-.5v-1a.5.5 0 0 0-.5-.5zm4.5.5A1.5 1.5 0 0 1 7.5 10h1a1.5 1.5 0 0 1 1.5 1.5v1A1.5 1.5 0 0 1 8.5 14h-1A1.5 1.5 0 0 1 6 12.5zm1.5-.5a.5.5 0 0 0-.5.5v1a.5.5 0 0 0 .5.5h1a.5.5 0 0 0 .5-.5v-1a.5.5 0 0 0-.5-.5zm4.5.5a1.5 1.5 0 0 1 1.5-1.5h1a1.5 1.5 0 0 1 1.5 1.5v1a1.5 1.5 0 0 1-1.5 1.5h-1a1.5 1.5 0 0 1-1.5-1.5zm1.5-.5a.5.5 0 0 0-.5.5v1a.5.5 0 0 0 .5.5h1a.5.5 0 0 0 .5-.5v-1a.5.5 0 0 0-.5-.5z"/></svg>
<span style="left:1683.00px;top:558.70px;font-size:28px;color:#6c757d;font-weight:700;letter-spacing:0.888px;">Router de Herramientas</span>
<div style="left:692px;top:695px;width:600px;height:62px;background:#f8f9fa;border:2px solid #dee2e6;border-radius:7px"></div>
<svg style="left:710px;top:712px;" width="28" height="28" viewBox="0 0 16 16" fill="#555b61"><path d="M11.742 10.344a6.5 6.5 0 1 0-1.397 1.398h-.001q.044.06.098.115l3.85 3.85a1 1 0 0 0 1.415-1.414l-3.85-3.85a1 1 0 0 0-.115-.1zM12 6.5a5.5 5.5 0 1 1-11 0 5.5 5.5 0 0 1 11 0"/></svg>
<span style="left:751.50px;top:712.87px;font-size:27.8px;color:#555a60;letter-spacing:0.583px;">Buscar usuario o texto...</span>
<div style="left:692px;top:789px;width:2088px;height:511px;background:#fff;border:2px solid #dee1e6;border-radius:10px;overflow:hidden;box-shadow:0 1px 3px rgba(0,0,0,.04)"><div style="position:absolute;left:0;top:0;right:0;height:68.5px;background:#f8f9fa"></div><div style="position:absolute;left:0;right:0;top:67.5px;height:2px;background:#dfe2e7"></div><div style="position:absolute;left:0;right:0;top:152.5px;height:2px;background:#dfe2e7"></div><div style="position:absolute;left:0;right:0;top:237.5px;height:2px;background:#dfe2e7"></div><div style="position:absolute;left:0;right:0;top:322.5px;height:2px;background:#dfe2e7"></div><div style="position:absolute;left:0;right:0;top:407px;height:2px;background:#dfe2e7"></div><div style="position:absolute;left:0;right:0;top:492px;height:2px;background:#dfe2e7"></div></div>
<span style="left:726.30px;top:814.76px;font-size:23.2px;color:#474c53;font-weight:700;letter-spacing:0.258px;">HORA</span>
<span style="left:1031.00px;top:814.76px;font-size:23.2px;color:#474c53;font-weight:700;letter-spacing:0.532px;">USER ID</span>
<span style="left:1489.50px;top:814.76px;font-size:23.2px;color:#474c53;font-weight:700;letter-spacing:0.547px;">PREVIEW / PROMPT</span>
<span style="left:2279.00px;top:814.76px;font-size:23.2px;color:#474c53;font-weight:700;letter-spacing:-0.426px;">PERF</span>
<span style="left:2481.00px;top:814.76px;font-size:23.2px;color:#474c53;font-weight:700;letter-spacing:0.832px;">STATUS</span>
<span style="left:726.50px;top:889.81px;font-size:27.4px;color:#495057;letter-spacing:0.857px;">5/3/2026, 18:45:39</span>
<span style="left:1032.40px;top:890.04px;font-size:27px;color:#6c757d;font-weight:700;letter-spacing:-0.157px;">fernando.libedinsky@gmail.com</span>
<span style="left:1489.50px;top:891.46px;font-size:24.5px;color:#212529;letter-spacing:0.287px;">dame una tabla con los empleados de sample</span>
<span style="left:2279.30px;top:878.84px;font-size:25px;color:#495057;font-family:'Liberation Mono', monospace;letter-spacing:-0.631px;">20 secs.</span>
<span style="left:2279.30px;top:905.21px;font-size:22.2px;color:#585d63;letter-spacing:1.171px;">20788 toks</span>
<svg style="left:2544px;top:888.5px;" width="27" height="27" viewBox="0 0 16 16" fill="#3b8456"><path d="M16 8A8 8 0 1 1 0 8a8 8 0 0 1 16 0m-3.97-3.03a.75.75 0 0 0-1.08.022L7.477 9.417 5.384 7.323a.75.75 0 0 0-1.06 1.06L6.97 11.03a.75.75 0 0 0 1.079-.02l3.992-4.99a.75.75 0 0 0-.01-1.05z"/></svg>
<div style="left:2683.3px;top:880px;width:62.6px;height:44.8px;background:#fff;border:2px solid #dfe1e8;border-radius:9px"></div>
<svg style="left:2700.5px;top:888.5px;" width="27" height="27" viewBox="0 0 16 16" fill="#4d559e"><path d="M11.742 10.344a6.5 6.5 0 1 0-1.397 1.398h-.001q.044.06.098.115l3.85 3.85a1 1 0 0 0 1.415-1.414l-3.85-3.85a1 1 0 0 0-.115-.1zM12 6.5a5.5 5.5 0 1 1-11 0 5.5 5.5 0 0 1 11 0"/></svg>
<span style="left:727.50px;top:974.81px;font-size:27.4px;color:#495057;letter-spacing:0.845px;">4/3/2026, 18:55:09</span>
<span style="left:1032.40px;top:975.04px;font-size:27px;color:#6c757d;font-weight:700;letter-spacing:-0.157px;">fernando.libedinsky@gmail.com</span>
<span style="left:1489.50px;top:976.46px;font-size:24.5px;color:#212529;letter-spacing:0.287px;">dame una tabla con los empleados de sample</span>
<span style="left:2279.30px;top:963.84px;font-size:25px;color:#495057;font-family:'Liberation Mono', monospace;letter-spacing:-0.631px;">13 secs.</span>
<span style="left:2279.30px;top:990.21px;font-size:22.2px;color:#585d63;letter-spacing:0.949px;">24196 toks</span>
<svg style="left:2544px;top:973.5px;" width="27" height="27" viewBox="0 0 16 16" fill="#3b8456"><path d="M16 8A8 8 0 1 1 0 8a8 8 0 0 1 16 0m-3.97-3.03a.75.75 0 0 0-1.08.022L7.477 9.417 5.384 7.323a.75.75 0 0 0-1.06 1.06L6.97 11.03a.75.75 0 0 0 1.079-.02l3.992-4.99a.75.75 0 0 0-.01-1.05z"/></svg>
<div style="left:2683.3px;top:965px;width:62.6px;height:44.8px;background:#fff;border:2px solid #dfe1e8;border-radius:9px"></div>
<svg style="left:2700.5px;top:973.5px;" width="27" height="27" viewBox="0 0 16 16" fill="#4d559e"><path d="M11.742 10.344a6.5 6.5 0 1 0-1.397 1.398h-.001q.044.06.098.115l3.85 3.85a1 1 0 0 0 1.415-1.414l-3.85-3.85a1 1 0 0 0-.115-.1zM12 6.5a5.5 5.5 0 1 1-11 0 5.5 5.5 0 0 1 11 0"/></svg>
<span style="left:727.50px;top:1059.81px;font-size:27.4px;color:#495057;letter-spacing:0.740px;">4/3/2026, 18:42:45</span>
<span style="left:1032.40px;top:1060.04px;font-size:27px;color:#6c757d;font-weight:700;letter-spacing:-0.157px;">fernando.libedinsky@gmail.com</span>
<span style="left:1489.50px;top:1061.46px;font-size:24.5px;color:#212529;letter-spacing:0.547px;">que tools conoces</span>
<span style="left:2279.30px;top:1048.84px;font-size:25px;color:#495057;font-family:'Liberation Mono', monospace;letter-spacing:-0.569px;">5 secs.</span>
<span style="left:2279.30px;top:1075.21px;font-size:22.2px;color:#585d63;letter-spacing:1.338px;">24037 toks</span>
<svg style="left:2544px;top:1058.5px;" width="27" height="27" viewBox="0 0 16 16" fill="#3b8456"><path d="M16 8A8 8 0 1 1 0 8a8 8 0 0 1 16 0m-3.97-3.03a.75.75 0 0 0-1.08.022L7.477 9.417 5.384 7.323a.75.75 0 0 0-1.06 1.06L6.97 11.03a.75.75 0 0 0 1.079-.02l3.992-4.99a.75.75 0 0 0-.01-1.05z"/></svg>
<div style="left:2683.3px;top:1050px;width:62.6px;height:44.8px;background:#fff;border:2px solid #dfe1e8;border-radius:9px"></div>
<svg style="left:2700.5px;top:1058.5px;" width="27" height="27" viewBox="0 0 16 16" fill="#4d559e"><path d="M11.742 10.344a6.5 6.5 0 1 0-1.397 1.398h-.001q.044.06.098.115l3.85 3.85a1 1 0 0 0 1.415-1.414l-3.85-3.85a1 1 0 0 0-.115-.1zM12 6.5a5.5 5.5 0 1 1-11 0 5.5 5.5 0 0 1 11 0"/></svg>
<span style="left:727.50px;top:1144.56px;font-size:27.4px;color:#495057;letter-spacing:0.798px;">4/3/2026, 18:42:32</span>
<span style="left:1032.40px;top:1144.79px;font-size:27px;color:#6c757d;font-weight:700;letter-spacing:-0.157px;">fernando.libedinsky@gmail.com</span>
<span style="left:1489.50px;top:1146.21px;font-size:24.5px;color:#212529;letter-spacing:0.460px;">quien soy yo</span>
<span style="left:2279.30px;top:1133.59px;font-size:25px;color:#495057;font-family:'Liberation Mono', monospace;letter-spacing:-0.569px;">5 secs.</span>
<span style="left:2279.30px;top:1159.96px;font-size:22.2px;color:#585d63;letter-spacing:1.171px;">23787 toks</span>
<svg style="left:2544px;top:1143.25px;" width="27" height="27" viewBox="0 0 16 16" fill="#3b8456"><path d="M16 8A8 8 0 1 1 0 8a8 8 0 0 1 16 0m-3.97-3.03a.75.75 0 0 0-1.08.022L7.477 9.417 5.384 7.323a.75.75 0 0 0-1.06 1.06L6.97 11.03a.75.75 0 0 0 1.079-.02l3.992-4.99a.75.75 0 0 0-.01-1.05z"/></svg>
<div style="left:2683.3px;top:1134.75px;width:62.6px;height:44.8px;background:#fff;border:2px solid #dfe1e8;border-radius:9px"></div>
<svg style="left:2700.5px;top:1143.25px;" width="27" height="27" viewBox="0 0 16 16" fill="#4d559e"><path d="M11.742 10.344a6.5 6.5 0 1 0-1.397 1.398h-.001q.044.06.098.115l3.85 3.85a1 1 0 0 0 1.415-1.414l-3.85-3.85a1 1 0 0 0-.115-.1zM12 6.5a5.5 5.5 0 1 1-11 0 5.5 5.5 0 0 1 11 0"/></svg>
<span style="left:726.50px;top:1229.31px;font-size:27.4px;color:#495057;letter-spacing:0.642px;">3/3/2026, 11:30:54</span>
<span style="left:1032.40px;top:1229.54px;font-size:27px;color:#6c757d;font-weight:700;letter-spacing:-0.157px;">fernando.libedinsky@gmail.com</span>
<div style="left:1489.5px;top:1219.5px;width:236px;height:45.5px;background:#e8eefd;border:2px solid #2b63ea;border-radius:11px"></div>
<svg style="left:1508.2px;top:1231.9px;" width="20.6" height="20.6" viewBox="0 0 16 16" fill="#4a559f"><path d="M6 12.5a.5.5 0 0 1 .5-.5h3a.5.5 0 0 1 0 1h-3a.5.5 0 0 1-.5-.5M3 8.062C3 6.76 4.235 5.765 5.53 5.886a26.6 26.6 0 0 0 4.94 0C11.765 5.765 13 6.76 13 8.062v1.157a.93.93 0 0 1-.765.935c-.845.147-2.34.346-4.235.346s-3.39-.2-4.235-.346A.93.93 0 0 1 3 9.219zm4.542-.827a.25.25 0 0 0-.217.068l-.92.9a25 25 0 0 1-1.871-.183.25.25 0 0 0-.068.495c.55.076 1.232.149 2.02.193a.25.25 0 0 0 .189-.071l.754-.736.847 1.71a.25.25 0 0 0 .404.062l.932-.97a25 25 0 0 0 1.922-.188.25.25 0 0 0-.068-.495c-.538.074-1.207.145-1.98.189a.25.25 0 0 0-.166.076l-.754.785-.842-1.7a.25.25 0 0 0-.182-.135"/><path d="M8.5 1.866a1 1 0 1 0-1 0V3h-2A4.5 4.5 0 0 0 1 7.5V8a1 1 0 0 0-1 1v2a1 1 0 0 0 1 1v1a2 2 0 0 0 2 2h10a2 2 0 0 0 2-2v-1a1 1 0 0 0 1-1V9a1 1 0 0 0-1-1v-.5A4.5 4.5 0 0 0 10.5 3h-2zM14 7.5V13a1 1 0 0 1-1 1H3a1 1 0 0 1-1-1V7.5A3.5 3.5 0 0 1 5.5 4h5A3.5 3.5 0 0 1 14 7.5"/></svg>
<span style="left:1543.90px;top:1231.40px;font-size:21.5px;color:#4a559f;font-weight:700;letter-spacing:0.235px;">analisis_ventas</span>
<span style="left:2279.30px;top:1218.14px;font-size:25px;color:#f5c046;font-weight:700;font-family:'Liberation Mono', monospace;letter-spacing:-0.774px;">33 secs.</span>
<span style="left:2279.30px;top:1244.71px;font-size:22.2px;color:#585d63;letter-spacing:0.616px;">21821 toks</span>
<svg style="left:2544px;top:1228px;" width="27" height="27" viewBox="0 0 16 16" fill="#3b8456"><path d="M16 8A8 8 0 1 1 0 8a8 8 0 0 1 16 0m-3.97-3.03a.75.75 0 0 0-1.08.022L7.477 9.417 5.384 7.323a.75.75 0 0 0-1.06 1.06L6.97 11.03a.75.75 0 0 0 1.079-.02l3.992-4.99a.75.75 0 0 0-.01-1.05z"/></svg>
<div style="left:2683.3px;top:1219.5px;width:62.6px;height:44.8px;background:#fff;border:2px solid #dfe1e8;border-radius:9px"></div>
<svg style="left:2700.5px;top:1228px;" width="27" height="27" viewBox="0 0 16 16" fill="#4d559e"><path d="M11.742 10.344a6.5 6.5 0 1 0-1.397 1.398h-.001q.044.06.098.115l3.85 3.85a1 1 0 0 0 1.415-1.414l-3.85-3.85a1 1 0 0 0-.115-.1zM12 6.5a5.5 5.5 0 1 1-11 0 5.5 5.5 0 0 1 11 0"/></svg>
</body></html>
